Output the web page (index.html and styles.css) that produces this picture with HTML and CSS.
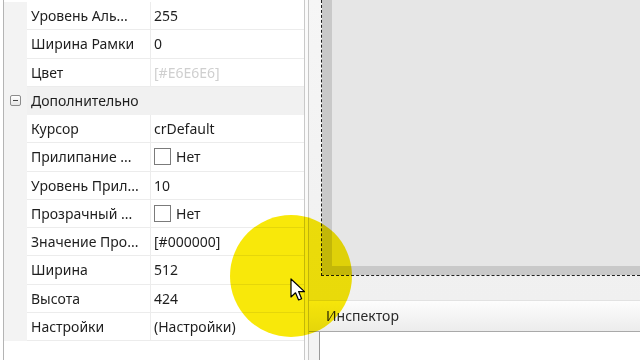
FILE: index.html
```html
<!DOCTYPE html>
<html lang="ru">
<head>
<meta charset="utf-8">
<link rel="stylesheet" href="styles.css">
</head>
<body>
<div class="props">
  <div class="grid">
    <div class="row"><div class="gut"></div><div class="name">Уровень Аль...</div><div class="val">255</div></div>
    <div class="row"><div class="gut"></div><div class="name">Ширина Рамки</div><div class="val">0</div></div>
    <div class="row"><div class="gut"></div><div class="name">Цвет</div><div class="val dis">[#E6E6E6]</div></div>
    <div class="row cat"><div class="gut"><span class="minus"></span></div><div class="name">Дополнительно</div></div>
    <div class="row"><div class="gut"></div><div class="name">Курсор</div><div class="val">crDefault</div></div>
    <div class="row"><div class="gut"></div><div class="name">Прилипание ...</div><div class="val"><span class="chk"></span>Нет</div></div>
    <div class="row"><div class="gut"></div><div class="name">Уровень Прил...</div><div class="val">10</div></div>
    <div class="row"><div class="gut"></div><div class="name">Прозрачный ...</div><div class="val"><span class="chk"></span>Нет</div></div>
    <div class="row"><div class="gut"></div><div class="name">Значение Про...</div><div class="val">[#000000]</div></div>
    <div class="row"><div class="gut"></div><div class="name">Ширина</div><div class="val">512</div></div>
    <div class="row"><div class="gut"></div><div class="name">Высота</div><div class="val">424</div></div>
    <div class="row"><div class="gut"></div><div class="name">Настройки</div><div class="val">(Настройки)</div></div>
  </div>
</div>
<div class="split"></div>
<div class="work">
  <div class="designer">
    <div class="canvas"><div class="form"></div></div>
  </div>
  <div class="insp-title">Инспектор</div>
  <div class="insp-body"></div>
</div>
<div class="spot"></div>
<svg class="cursor" width="18" height="24" viewBox="0 0 18 24"><path d="M1 1 V19 L5.5 14.8 L8.6 22 L11.6 20.7 L8.6 13.6 H14.5 Z" fill="#fff" stroke="#000" stroke-width="1.2" stroke-linejoin="round"/></svg>
</body>
</html>
```
FILE: styles.css
```css
html, body {
  margin: 0;
  padding: 0;
}
body {
  width: 640px;
  height: 360px;
  overflow: hidden;
  display: flex;
  position: relative;
  background: #fff;
  font-family: "Noto Sans", "Open Sans", sans-serif;
  font-size: 14px;
  color: #1e1e1e;
}
.props {
  width: 301px;
  padding-left: 3px;
  border-right: 1px solid #c9c9c9;
  background: #fff;
  display: flex;
  flex-direction: column;
}
.grid {
  border-left: 1px solid #b4b4b4;
  padding-top: 2px;
  flex: 1;
}
.row {
  display: flex;
  height: 28.25px;
  box-sizing: border-box;
}
.gut {
  width: 23px;
  background: #f3f3f3;
  display: flex;
  align-items: center;
  justify-content: center;
}
.name {
  width: 119px;
  padding-left: 4px;
  border-right: 1px solid #ececec;
  border-bottom: 1px solid #ececec;
  display: flex;
  align-items: center;
  white-space: nowrap;
  overflow: hidden;
}
.val {
  flex: 1;
  padding-left: 3px;
  border-bottom: 1px solid #ececec;
  display: flex;
  align-items: center;
  white-space: nowrap;
}
.dis { color: #cfcfcf; }
.cat { background: #f1f1f1; }
.cat .name { border: none; flex: 1; }
.minus {
  width: 9px;
  height: 9px;
  border: 1px solid #8c8c8c;
  border-radius: 2px;
  background: linear-gradient(#fff, #e6e6e6);
  position: relative;
}
.minus::after {
  content: "";
  position: absolute;
  left: 2px;
  right: 2px;
  top: 4px;
  height: 1px;
  background: #444;
}
.chk {
  width: 15px;
  height: 15px;
  border: 1px solid #7b7b7b;
  background: #fff;
  margin-right: 5px;
}
.split {
  width: 3px;
  background: #fafafa;
  border-right: 1px solid #c6c6c6;
}
.work {
  flex: 1;
  display: flex;
  flex-direction: column;
  background: #f3f3f3;
}
.designer {
  height: 300px;
  padding-left: 12px;
  box-sizing: border-box;
  background: linear-gradient(#f6f6f6, #f0f0f0);
}
.canvas {
  height: 276px;
  border-left: 1px dashed #222;
  border-bottom: 1px dashed #222;
  box-sizing: border-box;
}
.form {
  height: 100%;
  box-sizing: border-box;
  border-left: 10px solid #c9c9c9;
  border-bottom: 9px solid #c9c9c9;
  background: #e6e6e6;
}
.insp-title {
  height: 32px;
  box-sizing: border-box;
  padding-left: 17px;
  padding-bottom: 2px;
  display: flex;
  align-items: center;
  background: linear-gradient(#fdfdfd, #ececec);
  border-top: 1px solid #e2e2e2;
  border-bottom: 1px solid #a9a9a9;
  color: #2a2a2a;
}
.insp-body {
  flex: 1;
  margin-left: 10px;
  background: #fff;
  border-left: 1px solid #9a9a9a;
}
.spot {
  position: absolute;
  left: 230px;
  top: 215px;
  width: 122px;
  height: 122px;
  border-radius: 50%;
  background: radial-gradient(circle, rgb(248, 232, 10) 0, rgb(248, 232, 10) 82%, rgba(248, 232, 10, 0) 100%);
  mix-blend-mode: multiply;
}
.cursor {
  position: absolute;
  left: 290px;
  top: 278px;
}
```
